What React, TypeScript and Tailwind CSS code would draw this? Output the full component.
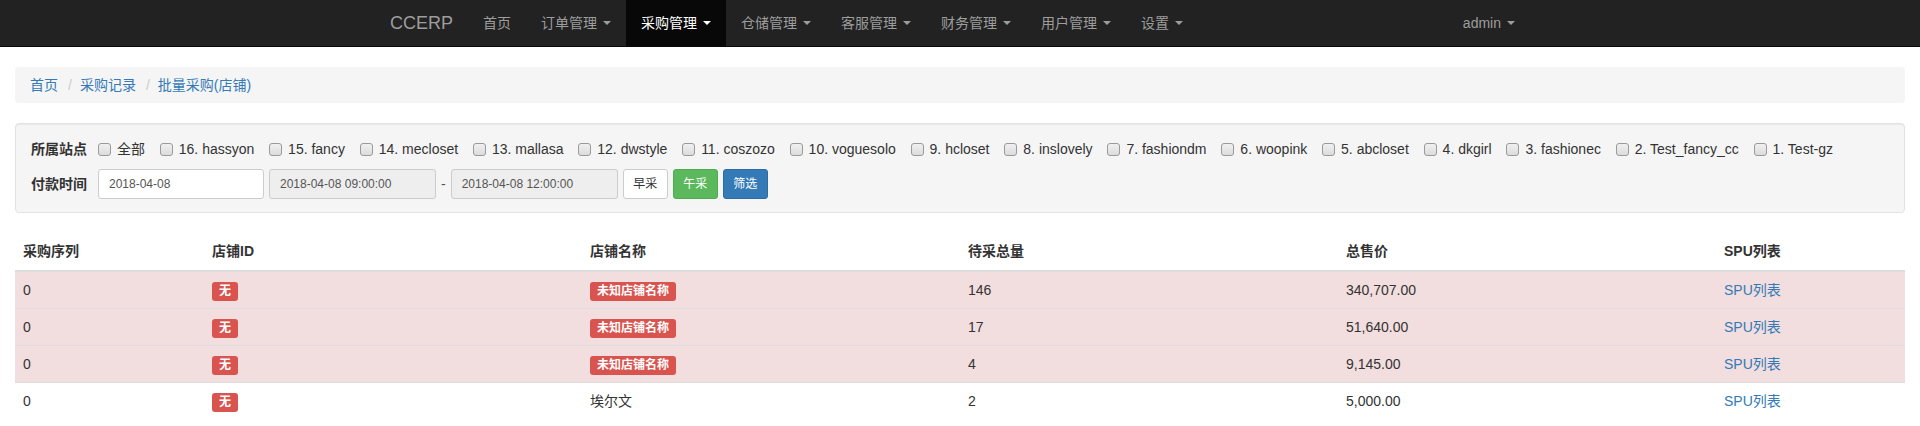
import React from 'react'

const navItems = [
  { label: '订单管理', caret: true },
  { label: '采购管理', caret: true, active: true },
  { label: '仓储管理', caret: true },
  { label: '客服管理', caret: true },
  { label: '财务管理', caret: true },
  { label: '用户管理', caret: true },
  { label: '设置', caret: true },
]

const sites = [
  '全部',
  '16. hassyon',
  '15. fancy',
  '14. mecloset',
  '13. mallasa',
  '12. dwstyle',
  '11. coszozo',
  '10. voguesolo',
  '9. hcloset',
  '8. inslovely',
  '7. fashiondm',
  '6. woopink',
  '5. abcloset',
  '4. dkgirl',
  '3. fashionec',
  '2. Test_fancy_cc',
  '1. Test-gz',
]

const rows = [
  { seq: '0', shop: null, qty: '146', price: '340,707.00', danger: true },
  { seq: '0', shop: null, qty: '17', price: '51,640.00', danger: true },
  { seq: '0', shop: null, qty: '4', price: '9,145.00', danger: true },
  { seq: '0', shop: '埃尔文', qty: '2', price: '5,000.00', danger: false },
]

function Caret() {
  return (
    <span className="inline-block w-0 h-0 ml-[6px] border-t-[4px] border-t-current border-x-[4px] border-x-transparent" />
  )
}

function Checkbox() {
  return (
    <span className="inline-block w-[13px] h-[13px] rounded-[3px] border border-[#9a9a9a] bg-gradient-to-b from-[#f0f0f0] to-[#dcdcdc] shrink-0" />
  )
}

function Badge({ children }: { children: React.ReactNode }) {
  return (
    <span className="relative top-[2px] inline-block h-[19px] px-[7px] rounded-[3px] bg-[#d9534f] text-white text-[12px] leading-[19px] font-bold align-top">
      {children}
    </span>
  )
}

export default function App() {
  return (
    <div className="min-h-[426px] bg-white text-[#333] text-[14px] leading-[20px] font-['Liberation_Sans','Noto_Sans_CJK_SC',sans-serif]">
      {/* 导航栏 */}
      <nav className="h-[47px] bg-[#222] border-b border-[#080808]">
        <div className="max-w-[1170px] mx-auto px-[15px] h-[46px] flex">
          <a className="-ml-[15px] px-[15px] flex items-center text-[18px] text-[#9d9d9d]">CCERP</a>
          <a className="px-[15px] flex items-center text-[#9d9d9d]">首页</a>
          {navItems.map((item) => (
            <a
              key={item.label}
              className={
                item.active
                  ? 'px-[15px] flex items-center bg-[#080808] text-white'
                  : 'px-[15px] flex items-center text-[#9d9d9d]'
              }
            >
              {item.label}
              {item.caret && <Caret />}
            </a>
          ))}
          <a className="ml-auto px-[15px] flex items-center text-[#9d9d9d]">
            admin
            <Caret />
          </a>
        </div>
      </nav>

      <div className="px-[15px] pt-[20px]">
        {/* 面包屑 */}
        <div className="h-[36px] px-[15px] flex items-center bg-[#f5f5f5] rounded-[4px] text-[#337ab7]">
          <a>首页</a>
          <span className="ml-[10px] mr-[8px] text-[#ccc]">/</span>
          <a>采购记录</a>
          <span className="ml-[10px] mr-[8px] text-[#ccc]">/</span>
          <span>批量采购(店铺)</span>
        </div>

        {/* 筛选 */}
        <div className="mt-[20px] px-[15px] pt-[15px] pb-[13px] bg-[#f5f5f5] border border-[#e3e3e3] rounded-[4px] shadow-[inset_0_1px_1px_rgba(0,0,0,0.05)]">
          <div className="flex items-center h-[20px]">
            <span className="font-bold mr-[11px]">所属站点</span>
            {sites.map((s) => (
              <label key={s} className="flex items-center mr-[14.8px]">
                <Checkbox />
                <span className="ml-[6px] whitespace-pre">{s}</span>
              </label>
            ))}
          </div>
          <div className="flex items-center mt-[10px]">
            <span className="font-bold mr-[11px]">付款时间</span>
            <div className="w-[166px] h-[30px] px-[10px] flex items-center bg-white border border-[#ccc] rounded-[3px] text-[12px] text-[#555]">
              2018-04-08
            </div>
            <div className="ml-[5px] w-[167px] h-[30px] px-[10px] flex items-center bg-[#eee] border border-[#ccc] rounded-[3px] text-[12px] text-[#555]">
              2018-04-08 09:00:00
            </div>
            <span className="mx-[5px] text-[#555]">-</span>
            <div className="w-[167px] h-[30px] px-[10px] flex items-center bg-[#eee] border border-[#ccc] rounded-[3px] text-[12px] text-[#555]">
              2018-04-08 12:00:00
            </div>
            <button className="ml-[5px] w-[45px] h-[30px] bg-white border border-[#ccc] rounded-[3px] text-[12px] text-[#333]">
              早采
            </button>
            <button className="ml-[5px] w-[45px] h-[30px] bg-[#5cb85c] border border-[#4cae4c] rounded-[3px] text-[12px] text-white">
              午采
            </button>
            <button className="ml-[5px] w-[45px] h-[30px] bg-[#337ab7] border border-[#2e6da4] rounded-[3px] text-[12px] text-white">
              筛选
            </button>
          </div>
        </div>

        {/* 表格 */}
        <table className="mt-[20px] w-full border-collapse table-fixed">
          <colgroup>
            <col className="w-[10%]" />
            <col className="w-[20%]" />
            <col className="w-[20%]" />
            <col className="w-[20%]" />
            <col className="w-[20%]" />
            <col className="w-[10%]" />
          </colgroup>
          <thead>
            <tr className="border-b-2 border-[#ddd]">
              <th className="px-[8px] pt-[8px] pb-[9px] text-left font-bold">采购序列</th>
              <th className="px-[8px] pt-[8px] pb-[9px] text-left font-bold">店铺ID</th>
              <th className="px-[8px] pt-[8px] pb-[9px] text-left font-bold">店铺名称</th>
              <th className="px-[8px] pt-[8px] pb-[9px] text-left font-bold">待采总量</th>
              <th className="px-[8px] pt-[8px] pb-[9px] text-left font-bold">总售价</th>
              <th className="px-[8px] pt-[8px] pb-[9px] text-left font-bold">SPU列表</th>
            </tr>
          </thead>
          <tbody>
            {rows.map((r, i) => (
              <tr key={i} className={r.danger ? 'bg-[#f2dede] border-t border-[#ddd]' : 'border-t border-[#ddd]'}>
                <td className="p-[8px]">{r.seq}</td>
                <td className="p-[8px]">
                  <Badge>无</Badge>
                </td>
                <td className="p-[8px]">{r.shop ? r.shop : <Badge>未知店铺名称</Badge>}</td>
                <td className="p-[8px]">{r.qty}</td>
                <td className="p-[8px]">{r.price}</td>
                <td className="p-[8px] text-[#337ab7]">SPU列表</td>
              </tr>
            ))}
          </tbody>
        </table>
      </div>
    </div>
  )
}
